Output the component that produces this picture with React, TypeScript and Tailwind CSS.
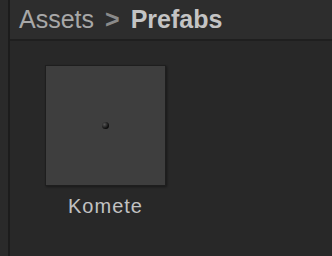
export default function App() {
  return (
    <div className="flex h-[256px] w-[332px] overflow-hidden bg-[#282828] font-['Liberation_Sans',Arial,sans-serif]">
      <div className="w-[10px] bg-[#2a2a2a] border-r-2 border-[#1c1c1c]" />
      <div className="flex flex-1 flex-col">
        <div className="flex h-[41px] items-center gap-[11px] border-b-2 border-[#1f1f1f] bg-[#2d2d2d] pl-[9px] pt-[1px] text-[25px]">
          <span className="text-[#a8a8a8]">Assets</span>
          <span className="text-[#8a8a8a] font-bold">&gt;</span>
          <span className="font-bold text-[#c4c4c4]">Prefabs</span>
        </div>
        <div className="flex flex-col items-start pl-[35px] pt-[24px]">
          <div className="flex flex-col items-center w-[121px]">
            <div className="flex h-[121px] w-[121px] items-center justify-center border border-[#1e1e1e] bg-[#3e3e3e] shadow-[1px_1px_2px_rgba(0,0,0,0.4)]">
              <div className="h-[7px] w-[7px] rounded-full bg-[radial-gradient(circle_at_35%_35%,#555,#0a0a0a_70%)]" />
            </div>
            <span className="mt-[5px] text-[20px] tracking-[1px] text-[#c2c2c2]">Komete</span>
          </div>
        </div>
      </div>
    </div>
  );
}
